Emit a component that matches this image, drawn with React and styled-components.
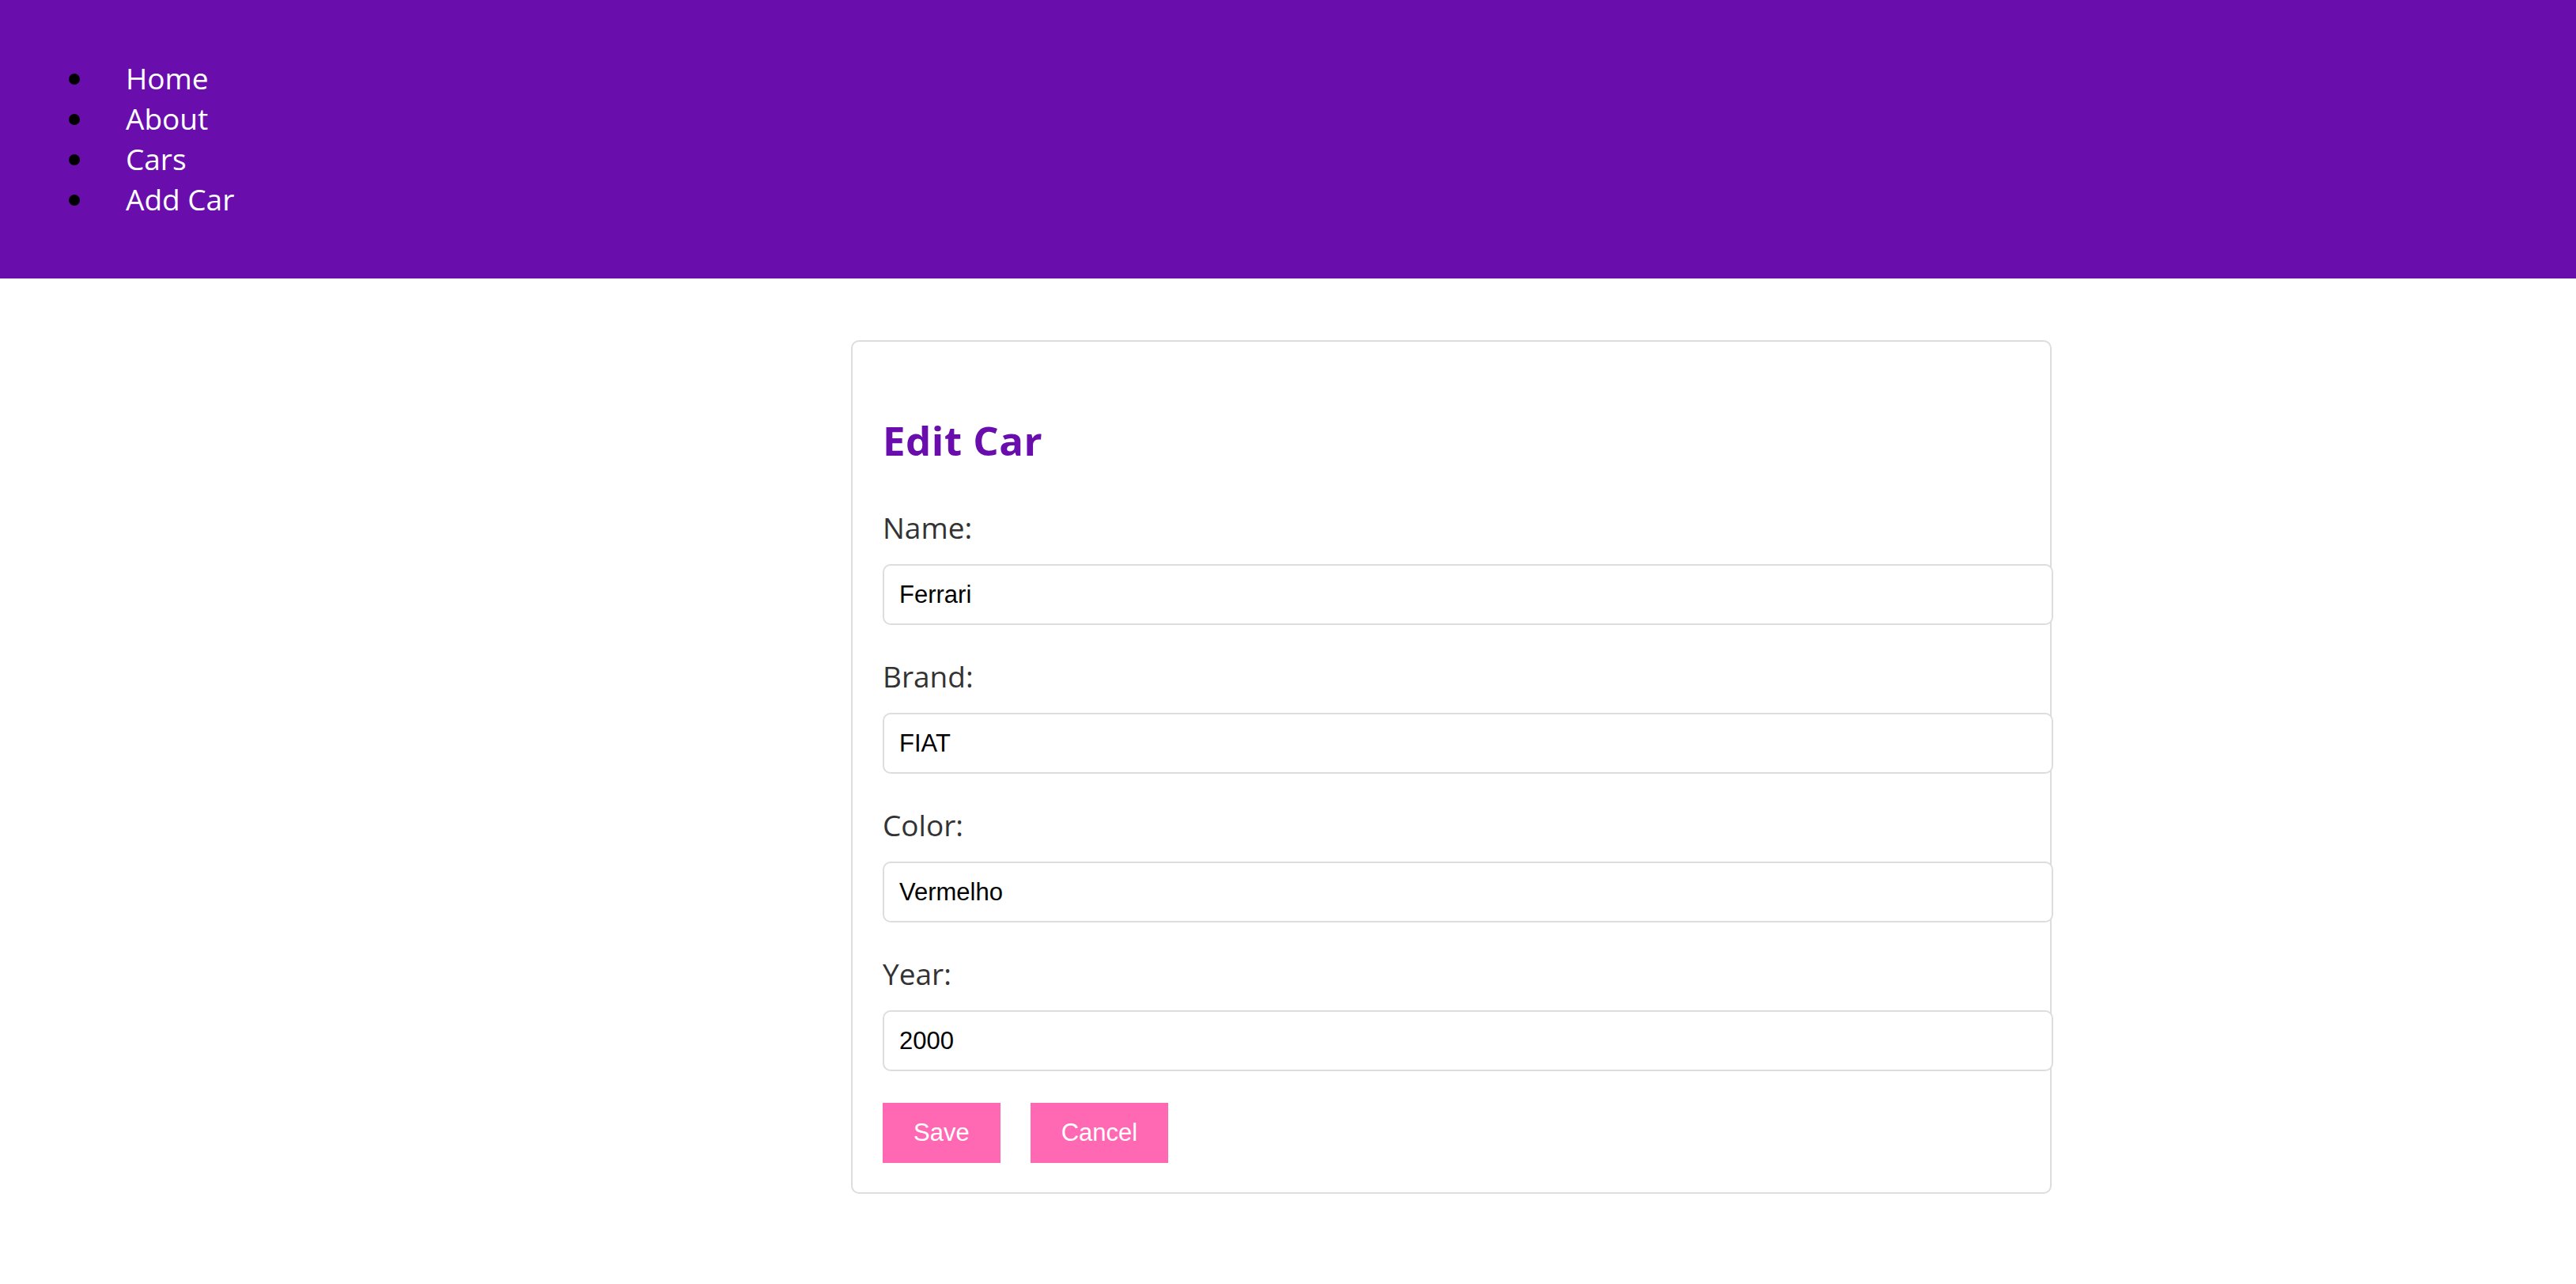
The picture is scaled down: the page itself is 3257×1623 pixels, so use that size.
import React, { useState } from "react";
import styled, { createGlobalStyle } from "styled-components";

const GlobalStyle = createGlobalStyle`
  body {
    margin: 0;
    background: #fff;
    font-family: "Open Sans", "Noto Sans", sans-serif;
  }
`;

const purple = "#6a0dad";
const pink = "#ff69b4";

const links = ["Home", "About", "Cars", "Add Car"];

const App = () => {
  const [car, setCar] = useState({
    name: "Ferrari",
    brand: "FIAT",
    color: "Vermelho",
    year: "2000",
  });

  const fields = [
    { key: "name", label: "Name:" },
    { key: "brand", label: "Brand:" },
    { key: "color", label: "Color:" },
    { key: "year", label: "Year:" },
  ];

  const handleChange = (key) => (e) => setCar({ ...car, [key]: e.target.value });

  return (
    <>
      <GlobalStyle />
      <Header>
        <NavList>
          {links.map((l) => (
            <NavItem key={l}>
              <NavLink href="#">{l}</NavLink>
            </NavItem>
          ))}
        </NavList>
      </Header>

      <Card onSubmit={(e) => e.preventDefault()}>
        <Title>Edit Car</Title>
        {fields.map((f) => (
          <FormRow key={f.key}>
            <Label htmlFor={f.key}>{f.label}</Label>
            <Input id={f.key} type="text" value={car[f.key]} onChange={handleChange(f.key)} />
          </FormRow>
        ))}
        <ButtonRow>
          <Button type="submit">Save</Button>
          <Button type="button">Cancel</Button>
        </ButtonRow>
      </Card>
    </>
  );
};

export default App;

const Header = styled.header`
  background-color: ${purple};
  padding: 73px 0 75px;
`;

const NavList = styled.ul`
  list-style: none;
  margin: 0;
  padding: 0;
`;

const NavItem = styled.li`
  display: flex;
  align-items: center;
  font-size: 37px;
  line-height: 51px;

  &::before {
    content: "";
    width: 14px;
    height: 14px;
    margin: 3px 58px 0 87px;
    border-radius: 50%;
    background: #000;
  }
`;

const NavLink = styled.a`
  color: #fff;
  text-decoration: none;
`;

const Card = styled.form`
  width: 1438px;
  margin: 78px 0 0 1076px;
  padding: 38px 38px 37px;
  border: 2px solid #ddd;
  border-radius: 10px;
  display: flex;
  flex-direction: column;
`;

const Title = styled.h2`
  margin: 53px 0 53px;
  color: ${purple};
  font-size: 51px;
  font-weight: 700;
  letter-spacing: 0.5px;
  line-height: 66px;
`;

const FormRow = styled.div`
  display: flex;
  flex-direction: column;
  margin-bottom: 40px;
`;

const Label = styled.label`
  color: #333;
  font-size: 37px;
  line-height: 50px;
  margin-bottom: 21px;
`;

const Input = styled.input`
  width: 100%;
  padding: 17.5px 19px;
  border: 2px solid #ddd;
  border-radius: 10px;
  font-family: "Liberation Sans", Arial, sans-serif;
  font-size: 31px;
  line-height: 38px;
  height: 38px;
  color: #000;
  background: #fff;
  outline: none;
`;

const ButtonRow = styled.div`
  display: flex;
  gap: 38px;
`;

const Button = styled.button`
  padding: 20px 39px;
  border: none;
  background-color: ${pink};
  color: #fff;
  font-family: "Liberation Sans", Arial, sans-serif;
  font-size: 31px;
  line-height: 36px;
  cursor: pointer;
`;
